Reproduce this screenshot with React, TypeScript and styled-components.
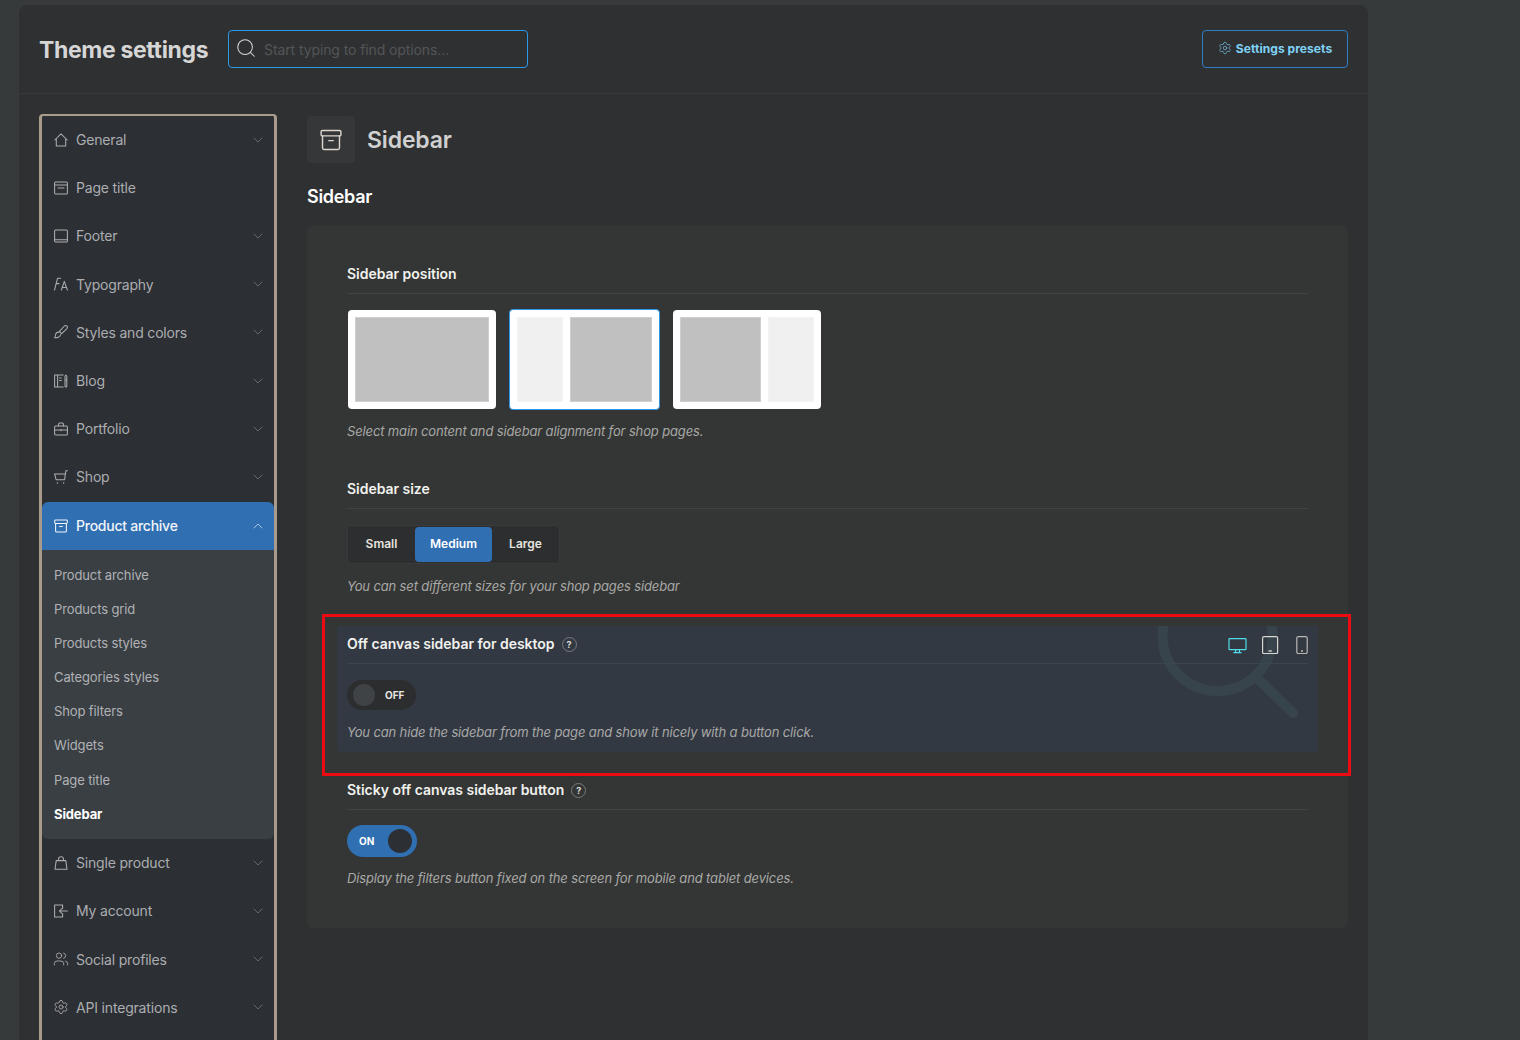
import { FC, ReactNode } from "react"
import styled, { createGlobalStyle } from "styled-components"
import { ChevronDown, ChevronUp, Search, Settings, Users } from "lucide-react"

const GlobalStyle = createGlobalStyle`
  html, body {
    margin: 0;
    height: 1040px;
    overflow: hidden;
    background: #363a3b;
    font-family: Inter, "Noto Sans", "Liberation Sans", sans-serif;
  }
  * { box-sizing: border-box; }
`

//icons
const Svg: FC<{ children: ReactNode; size?: number }> = ({ children, size = 14 }) => (
  <svg
    width={size}
    height={size}
    viewBox="0 0 14 14"
    fill="none"
    stroke="currentColor"
    strokeWidth={size > 14 ? 0.9 : 1.05}
    strokeLinecap="round"
    strokeLinejoin="round"
    style={{ flexShrink: 0 }}
  >
    {children}
  </svg>
)

const HomeIcon = () => (
  <Svg>
    <path d="M.8 7 7 .8 13.2 7M2.3 6v7h9.4V6" />
  </Svg>
)
const PageIcon = () => (
  <Svg>
    <rect x=".6" y="1" width="12.8" height="12" rx="1" />
    <path d="M.6 4h12.8M4 7h6" />
  </Svg>
)
const FooterIcon = () => (
  <Svg>
    <rect x=".6" y="1" width="12.8" height="12" rx="1" />
    <path d="M.6 10.8h12.8" />
  </Svg>
)
const TypeIcon = () => (
  <Svg>
    <path d="M.5 13 3.6 1.2h3M2 6.6h3M7.4 13l2.9-8.6 3.1 8.6M8.4 10.4h3.9" />
  </Svg>
)
const BrushIcon = () => (
  <Svg>
    <path d="M12.9 1.1c-1-.9-2.2-.4-3 .4L5.4 6.4l2.2 2.2 4.9-4.5c.8-.8 1.3-2 .4-3Z" />
    <path d="M5.2 7.2c-2.3-.4-3.4 1-3.6 2.6-.1 1-.4 2-1 2.9 2.5.4 5.6-.4 6-3.2" />
  </Svg>
)
const BlogIcon = () => (
  <Svg>
    <path d="M9.2 1H.6v12h8.6M3.6 1v12M5.6 4h1.6M5.6 6.5h1.6" />
    <path d="M11 4.5V2.2l.9-1.2.9 1.2v9.8c0 .6-.4 1-.9 1s-.9-.4-.9-1V4.5ZM11 6h1.8" />
  </Svg>
)
const BagIcon = () => (
  <Svg>
    <rect x=".6" y="4" width="12.8" height="9" rx="1" />
    <path d="M4.6 4V2c0-.6.4-1 1-1h2.8c.6 0 1 .4 1 1v2M.6 8h12.8M7 7.2v1.6" />
  </Svg>
)
const CartIcon = () => (
  <Svg>
    <path d="M13.4 .8h-1.6l-1.2 9H2.2L.6 4h11" />
    <path d="M3.4 13h.1M9.6 13h.1" strokeWidth="1.4" />
  </Svg>
)
const ArchiveIcon: FC<{ size?: number }> = ({ size }) => (
  <Svg size={size}>
    <rect x=".7" y="1" width="12.6" height="3.4" rx=".8" />
    <path d="M1.6 4.4V12c0 .6.4 1 1 1h8.8c.6 0 1-.4 1-1V4.4M5.6 7.4h2.8" />
  </Svg>
)
const ShopBagIcon = () => (
  <Svg>
    <path d="M2.2 4.6h9.6l1.2 8.6H1l1.2-8.6ZM4.6 4.6V2.8C4.6 1.6 5.6.8 7 .8s2.4.8 2.4 2v1.8" />
  </Svg>
)
const AccountIcon = () => (
  <Svg>
    <path d="M8.6 4.4V1H.6v12h8V9.6M13.4 7H5.4M7.6 4.8 5.4 7l2.2 2.2" />
  </Svg>
)

const DesktopIcon = () => (
  <svg width="20" height="18" viewBox="0 0 20 18" fill="none" stroke="currentColor" strokeWidth="1.2">
    <rect x="2" y="2.6" width="17" height="11" rx=".6" />
    <path d="M8.6 13.6v2.4M12.4 13.6v2.4M6.4 16.6h8.2" />
  </svg>
)
const TabletIcon = () => (
  <svg width="18" height="18" viewBox="0 0 18 18" fill="none" stroke="currentColor" strokeWidth="1.2">
    <rect x="1.6" y=".6" width="15" height="17" rx="1.4" />
    <path d="M7.4 15h3.4" strokeWidth="1.4" />
  </svg>
)
const PhoneIcon = () => (
  <svg width="12" height="18" viewBox="0 0 12 18" fill="none" stroke="currentColor" strokeWidth="1.2">
    <rect x=".8" y=".6" width="10.4" height="17" rx="1.6" />
    <path d="M5 15h2" strokeWidth="1.4" />
  </svg>
)

//data
const navBefore = [
  { label: "General", icon: <HomeIcon />, chevron: true },
  { label: "Page title", icon: <PageIcon />, chevron: false },
  { label: "Footer", icon: <FooterIcon />, chevron: true },
  { label: "Typography", icon: <TypeIcon />, chevron: true },
  { label: "Styles and colors", icon: <BrushIcon />, chevron: true },
  { label: "Blog", icon: <BlogIcon />, chevron: true },
  { label: "Portfolio", icon: <BagIcon />, chevron: true },
  { label: "Shop", icon: <CartIcon />, chevron: true },
]
const navAfter = [
  { label: "Single product", icon: <ShopBagIcon /> },
  { label: "My account", icon: <AccountIcon /> },
  { label: "Social profiles", icon: <Users size={16} strokeWidth={1.3} /> },
  { label: "API integrations", icon: <Settings size={16} strokeWidth={1.3} /> },
]
const subItems = [
  "Product archive",
  "Products grid",
  "Products styles",
  "Categories styles",
  "Shop filters",
  "Widgets",
  "Page title",
]

export default function App() {
  return (
    <>
      <GlobalStyle />
      <Page>
        <Panel>
          <Header>
            <PageTitle>Theme settings</PageTitle>
            <SearchBox>
              <Search size={22} strokeWidth={1.1} color="#d8d8d8" />
              <SearchInput placeholder="Start typing to find options..." />
            </SearchBox>
            <PresetsButton>
              <Settings size={14} strokeWidth={1.3} color="#6fb4d4" />
              Settings presets
            </PresetsButton>
          </Header>

          <Body>
            <Nav>
              {navBefore.map((item) => (
                <NavRowTop key={item.label}>
                  <NavGlyph>{item.icon}</NavGlyph>
                  <NavLabel>{item.label}</NavLabel>
                  {item.chevron && <ChevronDown size={16} strokeWidth={1.2} color="#74787d" />}
                </NavRowTop>
              ))}
              <NavRowActive>
                <NavGlyph>
                  <ArchiveIcon />
                </NavGlyph>
                <NavLabel>Product archive</NavLabel>
                <ChevronUp size={16} strokeWidth={1.2} color="#c4d6ea" />
              </NavRowActive>
              <SubNav>
                {subItems.map((item) => (
                  <SubItem key={item}>{item}</SubItem>
                ))}
                <SubItem $active>Sidebar</SubItem>
              </SubNav>
              {navAfter.map((item) => (
                <NavRow key={item.label}>
                  <NavGlyph>{item.icon}</NavGlyph>
                  <NavLabel>{item.label}</NavLabel>
                  <ChevronDown size={16} strokeWidth={1.2} color="#74787d" />
                </NavRow>
              ))}
            </Nav>

            <Main>
              <MainHeader>
                <IconBox>
                  <ArchiveIcon size={22} />
                </IconBox>
                <MainTitle>Sidebar</MainTitle>
              </MainHeader>
              <SectionTitle>Sidebar</SectionTitle>

              <Card>
                <Field>
                  <FieldHead>
                    <FieldTitle>Sidebar position</FieldTitle>
                  </FieldHead>
                  <Options>
                    <Option>
                      <Pane $main />
                    </Option>
                    <Option $selected>
                      <Pane />
                      <Pane $main />
                    </Option>
                    <Option>
                      <Pane $main />
                      <Pane />
                    </Option>
                  </Options>
                  <Hint>Select main content and sidebar alignment for shop pages.</Hint>
                </Field>

                <Field>
                  <FieldHead>
                    <FieldTitle>Sidebar size</FieldTitle>
                  </FieldHead>
                  <Segmented>
                    <Segment $w={67}>Small</Segment>
                    <Segment $w={77} $active>
                      Medium
                    </Segment>
                    <Segment $w={67}>Large</Segment>
                  </Segmented>
                  <Hint $gap={12}>You can set different sizes for your shop pages sidebar</Hint>
                </Field>

                <HighlightField>
                  <Watermark width="150" height="100" viewBox="0 0 150 100" fill="none" stroke="#38444b" strokeWidth="10" strokeLinecap="round">
                    <circle cx="59.5" cy="10" r="55" />
                    <path d="M99 52 135 87" />
                  </Watermark>
                  <FieldHead $tint>
                    <FieldTitle>Off canvas sidebar for desktop</FieldTitle>
                    <HelpDot>?</HelpDot>
                    <Devices>
                      <Device $color="#52dbe8">
                        <DesktopIcon />
                      </Device>
                      <Device $color="#d8d6d0" $gap={14}>
                        <TabletIcon />
                      </Device>
                      <Device $color="#b8b6b2" $gap={17.5}>
                        <PhoneIcon />
                      </Device>
                    </Devices>
                  </FieldHead>
                  <ToggleOff>
                    <KnobOff />
                    OFF
                  </ToggleOff>
                  <Hint $gap={12}>You can hide the sidebar from the page and show it nicely with a button click.</Hint>
                  <RedFrame />
                </HighlightField>

                <Field>
                  <FieldHead>
                    <FieldTitle>Sticky off canvas sidebar button</FieldTitle>
                    <HelpDot>?</HelpDot>
                  </FieldHead>
                  <ToggleOn>
                    ON
                    <KnobOn />
                  </ToggleOn>
                  <Hint>Display the filters button fixed on the screen for mobile and tablet devices.</Hint>
                </Field>
              </Card>
            </Main>
          </Body>
        </Panel>
      </Page>
    </>
  )
}

const Page = styled.div`
  height: 1040px;
  padding: 5px 0 0 19px;
  overflow: hidden;
`
const Panel = styled.div`
  width: 1349px;
  min-height: 1100px;
  background: #2f3032;
  border-radius: 8px 8px 0 0;
`
const Header = styled.header`
  height: 89px;
  padding: 25px 20px 0;
  display: flex;
  align-items: flex-start;
  border-bottom: 1px solid #37383a;
`
const PageTitle = styled.h1`
  margin: 0 20px 0 0;
  width: 169px;
  font-size: 23px;
  line-height: 40px;
  font-weight: 700;
  letter-spacing: -0.35px;
  color: #d6d6d6;
  white-space: nowrap;
`
const SearchBox = styled.div`
  width: 300px;
  height: 38px;
  padding: 0 10px 2px 6px;
  display: flex;
  align-items: center;
  gap: 7px;
  border: 1px solid #2a97e8;
  border-radius: 4px;
`
const SearchInput = styled.input`
  flex: 1;
  min-width: 0;
  padding: 2px 0 0;
  border: 0;
  outline: 0;
  background: transparent;
  font-family: inherit;
  font-size: 14px;
  letter-spacing: -0.1px;
  color: #d6d6d6;
  &::placeholder {
    color: #535558;
    opacity: 1;
  }
`
const PresetsButton = styled.button`
  margin-left: auto;
  width: 146px;
  height: 38px;
  padding: 0 0 2px;
  display: flex;
  align-items: center;
  justify-content: center;
  gap: 4px;
  background: transparent;
  border: 1px solid #2f7cc6;
  border-radius: 4px;
  font-family: inherit;
  font-size: 12px;
  letter-spacing: 0.06px;
  font-weight: 700;
  color: #7fd3f5;
  white-space: nowrap;
`
const Body = styled.div`
  padding: 20px 20px 0;
  display: flex;
  align-items: flex-start;
  gap: 30px;
`
const Nav = styled.nav`
  flex: 0 0 238px;
  padding-bottom: 40px;
  border: 3px solid #a89b8b;
  border-top-width: 2px;
  border-radius: 4px;
  background: #2c2f34;
`
const NavRow = styled.div`
  height: 48.2px;
  padding: 0 8px 0 12px;
  display: flex;
  align-items: center;
  gap: 8px;
  font-size: 14px;
  letter-spacing: -0.18px;
  color: #abadb0;
`
const NavRowTop = styled(NavRow)`
  padding-bottom: 1px;
`
const NavRowActive = styled(NavRow)`
  background: #306fb2;
  color: #f2f5f9;
  font-weight: 500;
  letter-spacing: -0.25px;
  border-radius: 6px 6px 0 0;
`
const NavGlyph = styled.span`
  flex: 0 0 14px;
  width: 14px;
  min-width: 0;
  height: 16px;
  display: flex;
  align-items: center;
  justify-content: center;
  svg {
    flex-shrink: 0;
  }
`
const NavLabel = styled.span`
  flex: 1;
  white-space: nowrap;
`
const SubNav = styled.div`
  padding: 8px 12px 8px;
  background: #3a3f44;
  border-radius: 0 0 6px 6px;
`
const SubItem = styled.div<{ $active?: boolean }>`
  height: 34.14px;
  display: flex;
  align-items: center;
  font-size: 13px;
  letter-spacing: -0.12px;
  font-weight: ${({ $active }) => ($active ? 700 : 400)};
  color: ${({ $active }) => ($active ? "#ffffff" : "#b0b2b5")};
`
const Main = styled.main`
  flex: 1;
  min-width: 0;
  padding-top: 2px;
`
const MainHeader = styled.div`
  display: flex;
  align-items: center;
  gap: 12px;
`
const IconBox = styled.div`
  width: 48px;
  height: 47px;
  display: flex;
  align-items: center;
  justify-content: center;
  background: #363739;
  border-radius: 4px;
  color: #ddd6cc;
`
const MainTitle = styled.div`
  font-size: 23px;
  font-weight: 600;
  letter-spacing: -0.15px;
  color: #d0d0d0;
`
const SectionTitle = styled.h2`
  margin: 22px 0 17px;
  font-size: 18px;
  line-height: 24px;
  font-weight: 600;
  letter-spacing: -0.3px;
  color: #ffffff;
`
const Card = styled.section`
  padding: 30px;
  display: flex;
  flex-direction: column;
  gap: 20px;
  background: #343635;
  border-radius: 6px;
`
const Field = styled.div`
  position: relative;
  padding: 8px 10px 10px;
`
const HighlightField = styled(Field)`
  background: #333943;
  border-radius: 4px;
`
const Watermark = styled.svg`
  position: absolute;
  top: 0;
  right: 10px;
`
const RedFrame = styled.div`
  position: absolute;
  top: -12px;
  right: -33px;
  bottom: -24px;
  left: -15px;
  border: 3px solid #ee0a12;
  pointer-events: none;
`
const FieldHead = styled.div<{ $tint?: boolean }>`
  position: relative;
  height: 30px;
  padding-bottom: 9px;
  display: flex;
  align-items: center;
  border-bottom: 1px solid ${({ $tint }) => ($tint ? "#3a4650" : "#414342")};
`
const FieldTitle = styled.div`
  font-size: 14px;
  line-height: 20px;
  font-weight: 600;
  letter-spacing: -0.03px;
  color: #f1f1ee;
  white-space: nowrap;
`
const HelpDot = styled.span`
  margin-left: 7px;
  width: 15px;
  height: 15px;
  display: flex;
  align-items: center;
  justify-content: center;
  border: 1px solid #77797b;
  border-radius: 50%;
  font-size: 9px;
  font-weight: 700;
  color: #dedcd6;
`
const Devices = styled.div`
  margin-left: auto;
  display: flex;
  align-items: center;
  transform: translateY(1px);
`
const Device = styled.span<{ $color: string; $gap?: number }>`
  display: flex;
  margin-left: ${({ $gap }) => $gap || 0}px;
  color: ${({ $color }) => $color};
`
const Options = styled.div`
  margin: 15px 0 0 1px;
  height: 101px;
  display: flex;
  align-items: center;
  gap: 13px;
`
const Option = styled.div<{ $selected?: boolean }>`
  width: ${({ $selected }) => ($selected ? 151 : 148)}px;
  height: ${({ $selected }) => ($selected ? 101 : 99)}px;
  padding: 7px;
  display: flex;
  gap: 7px;
  background: #ffffff;
  border: ${({ $selected }) => ($selected ? "1px solid #2a97e8" : "0")};
  border-radius: 4px;
`
const Pane = styled.div<{ $main?: boolean }>`
  flex: ${({ $main }) => ($main ? "1 1 0" : "0 0 46px")};
  background: ${({ $main }) => ($main ? "#c0c0c0" : "#f0f0f0")};
  border: 1px solid ${({ $main }) => ($main ? "#cfcfcf" : "#f3f3f3")};
`
const Hint = styled.p<{ $gap?: number }>`
  margin: ${({ $gap }) => $gap || 11}px 0 0;
  position: relative;
  font-size: 13px;
  line-height: 20px;
  font-style: italic;
  letter-spacing: -0.14px;
  color: #a8a8a6;
  white-space: nowrap;
`
const Segmented = styled.div`
  margin-top: 16px;
  width: 213px;
  height: 39px;
  padding: 1px 0;
  display: flex;
  background: #2d2e30;
  border: 1px solid #393a3c;
  border-radius: 4px;
`
const Segment = styled.div<{ $w: number; $active?: boolean }>`
  flex: 0 0 ${({ $w }) => $w}px;
  padding-bottom: 2px;
  display: flex;
  align-items: center;
  justify-content: center;
  font-size: 12px;
  font-weight: 600;
  color: ${({ $active }) => ($active ? "#ffffff" : "#e6e4de")};
  background: ${({ $active }) => ($active ? "#306fb2" : "transparent")};
  border-radius: 4px;
`
const ToggleOff = styled.div`
  position: relative;
  margin-top: 16px;
  width: 69px;
  height: 30px;
  padding: 0 0 1px 6px;
  display: flex;
  align-items: center;
  gap: 10px;
  background: #2c2d2f;
  border-radius: 15px;
  font-size: 10px;
  font-weight: 700;
  color: #e8e6e0;
`
const KnobOff = styled.span`
  width: 22px;
  height: 22px;
  background: #404346;
  border-radius: 50%;
`
const ToggleOn = styled.div`
  margin-top: 15px;
  width: 70px;
  height: 32px;
  padding: 0 5px 0 12px;
  display: flex;
  align-items: center;
  justify-content: space-between;
  background: #306fb2;
  border-radius: 16px;
  font-size: 10px;
  font-weight: 700;
  color: #ffffff;
`
const KnobOn = styled.span`
  width: 24px;
  height: 24px;
  background: #2c2f34;
  border-radius: 50%;
`
